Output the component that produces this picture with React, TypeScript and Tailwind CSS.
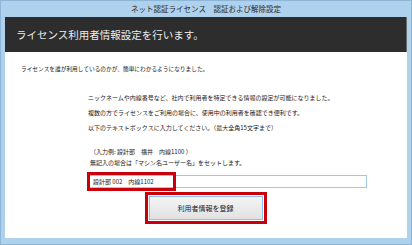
export default function App() {
  return (
    <div
      className="flex h-[245px] w-[412px] flex-col border border-[#8eb4d6] bg-[#aed1ee]"
      style={{ fontFamily: '"Noto Sans CJK JP", "Noto Sans", sans-serif' }}
    >
      {/* title bar */}
      <div className="flex h-[16px] items-center justify-center text-[7.5px] text-[#2b2b2b]">
        ネット認証ライセンス　認証および解除設定
      </div>

      <div className="mx-[4px] mb-[6px] flex flex-1 flex-col bg-white">
        <div className="flex h-[35px] items-center border-r border-[#6b6b6b] bg-[#2d2d2d] pl-[11px] text-[10.5px] text-[#ececec]">
          ライセンス利用者情報設定を行います。
        </div>

        <div className="flex flex-1 flex-col text-[#1a1a1a]">
          <p className="pl-[16px] pt-[13px] text-[5.7px] leading-[8px]">
            ライセンスを誰が利用しているのかが、簡単にわかるようになりました。
          </p>

          <div className="mt-[17px] pl-[83px] text-[6px] leading-[15px]">
            <p>ニックネームや内線番号など、社内で利用者を特定できる情報の設定が可能になりました。</p>
            <p>複数の方でライセンスをご利用の場合に、使用中の利用者を確認でき便利です。</p>
            <p>以下のテキストボックスに入力してください。（最大全角15文字まで）</p>
          </div>

          <div className="mt-[11px] pl-[85px] text-[6px] leading-[11px]">
            <p>（入力例: 設計部　福井　内線1100 ）</p>
            <p>無記入の場合は「マシン名ユーザー名」をセットします。</p>
          </div>

          <div className="relative ml-[83px] mt-[7px] flex h-[13px] w-[279px] items-center border border-[#9fc7ee] pl-[4px] text-[6px]">
            設計部 002　内線1102
            <div className="absolute left-[-2px] top-[-4px] h-[19px] w-[89px] border-[3px] border-[#c8000a]" />
          </div>

          <div className="mt-[4px] flex justify-center pr-[1px]">
            <div className="border-[3px] border-[#c8000a] p-[1px]">
              <button className="flex h-[24px] w-[114px] items-center justify-center border border-[#8cc0ef] bg-gradient-to-b from-[#f4f4f4] to-[#e2e2e2] text-[7px] text-[#1a1a1a]">
                利用者情報を登録
              </button>
            </div>
          </div>
        </div>
      </div>
    </div>
  );
}
